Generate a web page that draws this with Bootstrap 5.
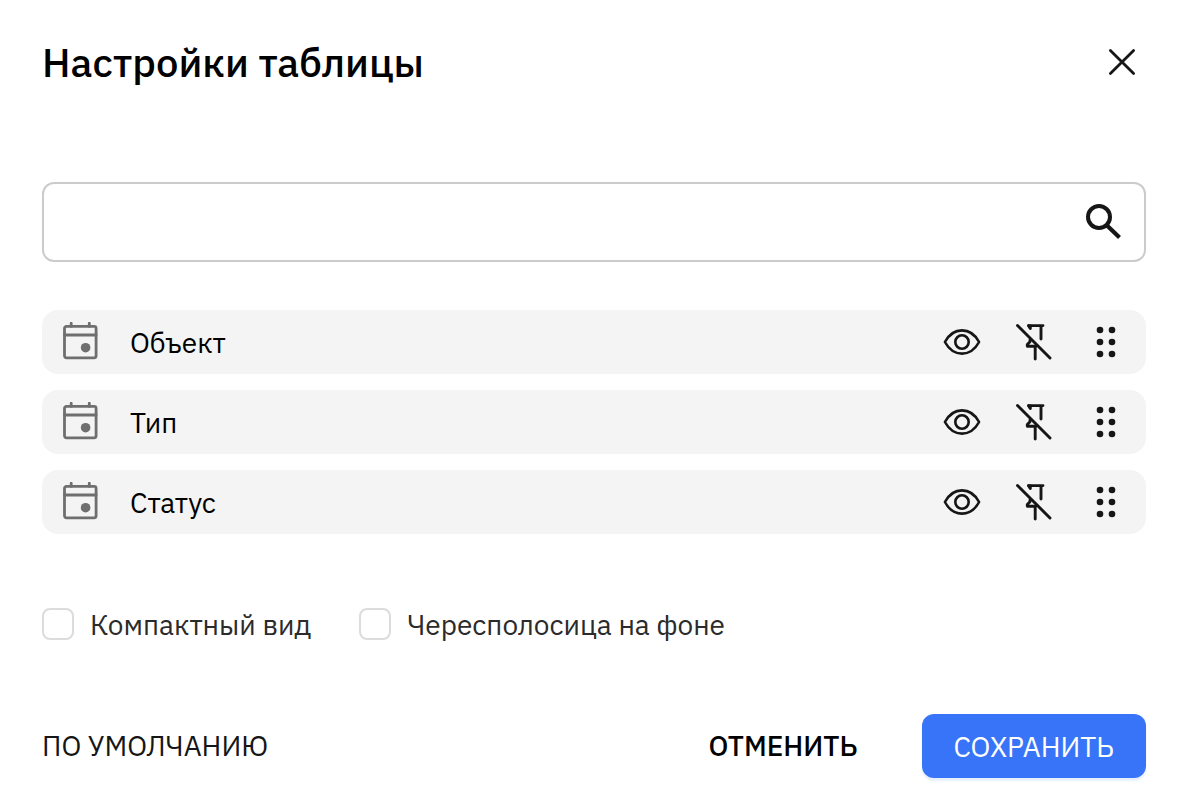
<!DOCTYPE html>
<html lang="ru">
<head>
<meta charset="utf-8">
<meta name="viewport" content="width=device-width, initial-scale=1">
<title>Настройки таблицы</title>
<link href="https://cdn.jsdelivr.net/npm/bootstrap@5.3.0/dist/css/bootstrap.min.css" rel="stylesheet">
<style>
  body { font-family: "IBM Plex Sans", Roboto, "Noto Sans", sans-serif; font-size: 28px; line-height: 40px; color: #161616; background: #fff; }
  .settings { padding: 37px 41px 24px 42px; }
  .settings-title { font-size: 40px; line-height: 50px; font-weight: 500; color: #000; }
  .settings .btn { font-size: 28px; line-height: 40px; border: 0; border-radius: 12px; }
  .settings svg { display: block; flex: none; }
  .search-box { margin-top: 95px; }
  .search-box .form-control { height: 80px; border: 2px solid #cbcbcb; border-radius: 12px; padding: 0 80px 0 20px; font-size: 28px; }
  .search-box .btn { right: 23px; top: 18px; }
  .column-list { margin-top: 48px; gap: 16px; }
  .column-item { height: 64px; border-radius: 16px; background: #f4f4f4; padding: 0 20px; color: #000; }
  .column-item .column-name { margin-left: 32px; padding-top: 2px; }
  .column-tools { gap: 32px; }
  .options { margin-top: 69px; gap: 48px; }
  .options .form-check { gap: 16px; }
  .options .form-check-input { width: 32px; height: 32px; margin: 0; border: 2px solid #dcdcdc; border-radius: 8px; float: none; }
  .options .form-check-label { color: #2b2b2b; padding-top: 2px; }
  .actions { margin-top: 69px; }
  .btn-save, .btn-save:hover { background: #3874f7; color: #fff; padding: 13px 32px 11px; min-width: 224px; box-shadow: 0 3px 2px #e6f0fc; }
  .btn-default { color: #161616; }
  .btn-cancel { color: #000; font-weight: 500; }
</style>
</head>
<body>
<svg class="d-none" aria-hidden="true">
  <symbol id="calendar" viewBox="0 0 40 40"><g fill="none" stroke="#6f6f6f" stroke-width="2.8" stroke-linecap="round" stroke-linejoin="round"><rect x="4.500" y="4.400" width="31.600" height="31.400" rx="2"/><path d="M4.500 13h31.600M11.200 4.400V1.200M29.300 4.400V1.200"/></g><circle cx="25.600" cy="25.700" r="4.800" fill="#6f6f6f"/></symbol>
  <symbol id="eye" viewBox="0 0 40 40"><g fill="none" stroke="#161616" stroke-width="2.600"><path d="M2.900 20C7 12.500 13.500 8.400 20 8.400S33 12.500 37.100 20C33 27.500 26.500 31.600 20 31.600S7 27.500 2.900 20Z" stroke-linejoin="round"/><circle cx="20" cy="20" r="6.700"/></g></symbol>
  <symbol id="unpin" viewBox="0 0 40 40"><g fill="none" stroke="#161616" stroke-width="2.900" stroke-linecap="round" stroke-linejoin="round"><path d="M3.500 3.500L36 36M14.500 3.600H29M27 3.700V17"/><path d="M14.600 3.700L16.300 6.500V4M16 18v1.800L13.300 22.500V24.300H22M21.200 24.500v12.500"/></g></symbol>
  <symbol id="grip" viewBox="0 0 40 40"><g fill="#161616"><circle cx="14" cy="8" r="3.300"/><circle cx="26" cy="8" r="3.300"/><circle cx="14" cy="20" r="3.300"/><circle cx="26" cy="20" r="3.300"/><circle cx="14" cy="32" r="3.300"/><circle cx="26" cy="32" r="3.300"/></g></symbol>
</svg>
<main class="settings">
  <header class="d-flex align-items-center justify-content-between">
    <h1 class="settings-title m-0">Настройки таблицы</h1>
    <button type="button" class="btn p-0 me-1" aria-label="Закрыть">
      <svg width="40" height="40" viewBox="0 0 40 40"><path d="M8.400 8.400L31.600 31.600M31.600 8.400L8.400 31.600" stroke="#161616" stroke-width="2.800" stroke-linecap="round"/></svg>
    </button>
  </header>

  <form class="search-box position-relative">
    <input type="search" class="form-control" aria-label="Поиск">
    <button type="button" class="btn p-0 position-absolute" aria-label="Найти">
      <svg width="40" height="40" viewBox="0 0 40 40" fill="none" stroke="#161616"><circle cx="16" cy="17" r="11" stroke-width="4"/><path d="M24 25.500L36.500 37.500" stroke-width="4.200"/></svg>
    </button>
  </form>

  <ul class="column-list list-unstyled d-flex flex-column mb-0">
    <li class="column-item d-flex align-items-center">
      <svg width="36" height="40" viewBox="2 0 36 40"><use href="#calendar" width="40" height="40"/></svg>
      <span class="column-name flex-grow-1">Объект</span>
      <span class="column-tools d-flex">
        <button type="button" class="btn p-0" aria-label="Показать"><svg width="40" height="40"><use href="#eye"/></svg></button>
        <button type="button" class="btn p-0" aria-label="Открепить"><svg width="40" height="40"><use href="#unpin"/></svg></button>
        <button type="button" class="btn p-0" aria-label="Переместить"><svg width="40" height="40"><use href="#grip"/></svg></button>
      </span>
    </li>
    <li class="column-item d-flex align-items-center">
      <svg width="36" height="40" viewBox="2 0 36 40"><use href="#calendar" width="40" height="40"/></svg>
      <span class="column-name flex-grow-1">Тип</span>
      <span class="column-tools d-flex">
        <button type="button" class="btn p-0" aria-label="Показать"><svg width="40" height="40"><use href="#eye"/></svg></button>
        <button type="button" class="btn p-0" aria-label="Открепить"><svg width="40" height="40"><use href="#unpin"/></svg></button>
        <button type="button" class="btn p-0" aria-label="Переместить"><svg width="40" height="40"><use href="#grip"/></svg></button>
      </span>
    </li>
    <li class="column-item d-flex align-items-center">
      <svg width="36" height="40" viewBox="2 0 36 40"><use href="#calendar" width="40" height="40"/></svg>
      <span class="column-name flex-grow-1">Статус</span>
      <span class="column-tools d-flex">
        <button type="button" class="btn p-0" aria-label="Показать"><svg width="40" height="40"><use href="#eye"/></svg></button>
        <button type="button" class="btn p-0" aria-label="Открепить"><svg width="40" height="40"><use href="#unpin"/></svg></button>
        <button type="button" class="btn p-0" aria-label="Переместить"><svg width="40" height="40"><use href="#grip"/></svg></button>
      </span>
    </li>
  </ul>

  <div class="options d-flex flex-wrap">
    <div class="form-check d-flex align-items-center p-0 m-0">
      <input class="form-check-input" type="checkbox" id="compact">
      <label class="form-check-label" for="compact">Компактный вид</label>
    </div>
    <div class="form-check d-flex align-items-center p-0 m-0">
      <input class="form-check-input" type="checkbox" id="striped">
      <label class="form-check-label" for="striped">Чересполосица на фоне</label>
    </div>
  </div>

  <footer class="actions d-flex align-items-center">
    <button type="button" class="btn btn-default p-0 me-auto">ПО УМОЛЧАНИЮ</button>
    <button type="button" class="btn btn-cancel p-0 me-5">ОТМЕНИТЬ</button>
    <button type="submit" class="btn btn-save ms-3">СОХРАНИТЬ</button>
  </footer>
</main>
<script src="https://cdn.jsdelivr.net/npm/bootstrap@5.3.0/dist/js/bootstrap.bundle.min.js"></script>
</body>
</html>
